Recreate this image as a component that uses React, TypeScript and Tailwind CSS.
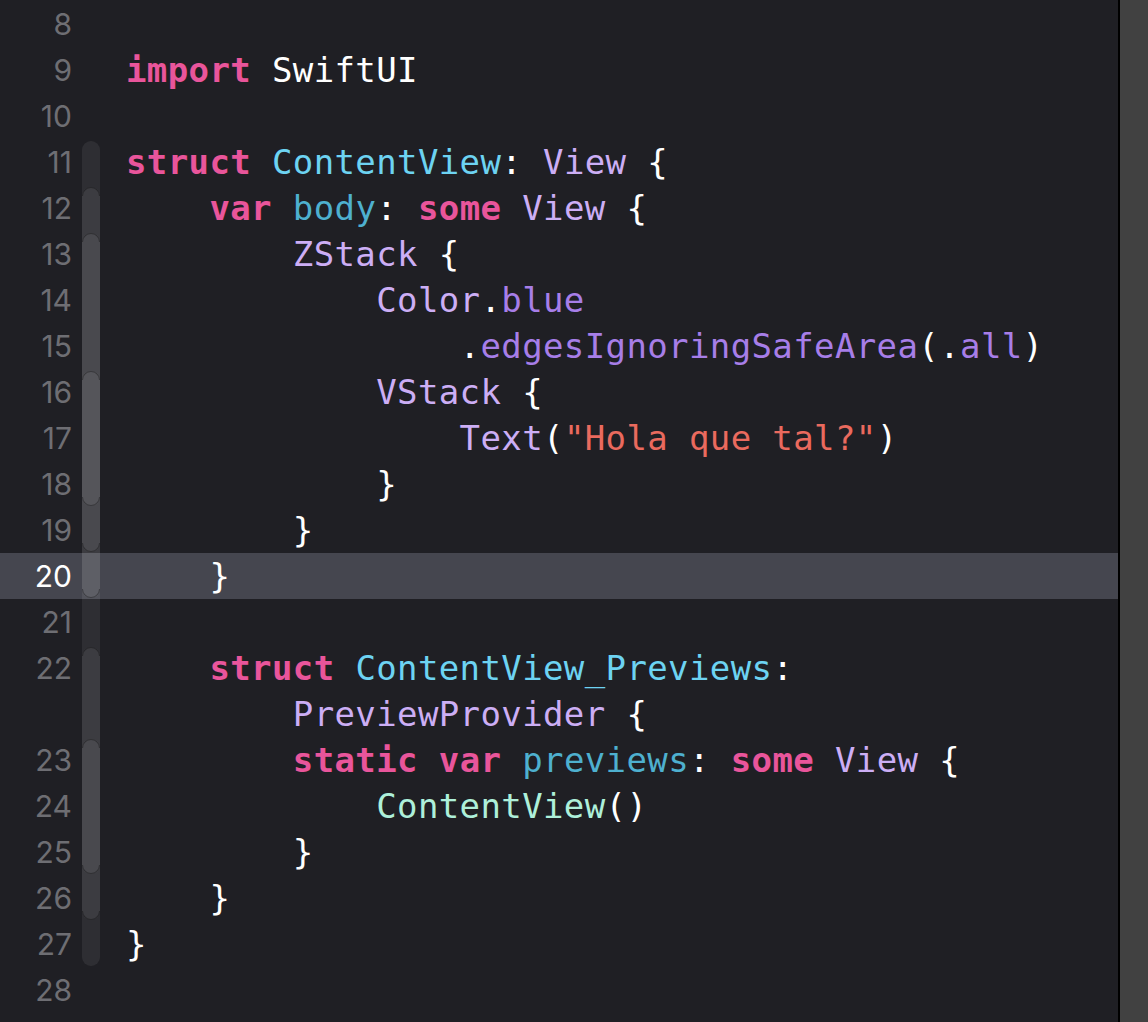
import React from 'react'

type Kind = 'kw' | 'plain' | 'decl' | 'type' | 'declOther' | 'prop' | 'str' | 'proj'
type Token = [Kind, string]

interface Row {
  num?: number
  indent: number
  tokens: Token[]
  active?: boolean
}

const kindClass: Record<Kind, string> = {
  kw: 'text-[#e9559b] font-bold',
  plain: 'text-white',
  decl: 'text-[#6dd3f2]',
  type: 'text-[#ccaef5]',
  declOther: 'text-[#4eb0cf]',
  prop: 'text-[#a77ee8]',
  str: 'text-[#ea6a5e]',
  proj: 'text-[#aef0da]',
}

const rows: Row[] = [
  { num: 8, indent: 0, tokens: [] },
  { num: 9, indent: 0, tokens: [['kw', 'import'], ['plain', ' SwiftUI']] },
  { num: 10, indent: 0, tokens: [] },
  {
    num: 11,
    indent: 0,
    tokens: [['kw', 'struct'], ['plain', ' '], ['decl', 'ContentView'], ['plain', ': '], ['type', 'View'], ['plain', ' {']],
  },
  {
    num: 12,
    indent: 1,
    tokens: [
      ['kw', 'var'],
      ['plain', ' '],
      ['declOther', 'body'],
      ['plain', ': '],
      ['kw', 'some'],
      ['plain', ' '],
      ['type', 'View'],
      ['plain', ' {'],
    ],
  },
  { num: 13, indent: 2, tokens: [['type', 'ZStack'], ['plain', ' {']] },
  { num: 14, indent: 3, tokens: [['type', 'Color'], ['plain', '.'], ['prop', 'blue']] },
  {
    num: 15,
    indent: 4,
    tokens: [['plain', '.'], ['prop', 'edgesIgnoringSafeArea'], ['plain', '(.'], ['prop', 'all'], ['plain', ')']],
  },
  { num: 16, indent: 3, tokens: [['type', 'VStack'], ['plain', ' {']] },
  { num: 17, indent: 4, tokens: [['type', 'Text'], ['plain', '('], ['str', '"Hola que tal?"'], ['plain', ')']] },
  { num: 18, indent: 3, tokens: [['plain', '}']] },
  { num: 19, indent: 2, tokens: [['plain', '}']] },
  { num: 20, indent: 1, tokens: [['plain', '}']], active: true },
  { num: 21, indent: 0, tokens: [] },
  { num: 22, indent: 1, tokens: [['kw', 'struct'], ['plain', ' '], ['decl', 'ContentView_Previews'], ['plain', ':']] },
  { indent: 2, tokens: [['type', 'PreviewProvider'], ['plain', ' {']] },
  {
    num: 23,
    indent: 2,
    tokens: [
      ['kw', 'static'],
      ['plain', ' '],
      ['kw', 'var'],
      ['plain', ' '],
      ['declOther', 'previews'],
      ['plain', ': '],
      ['kw', 'some'],
      ['plain', ' '],
      ['type', 'View'],
      ['plain', ' {'],
    ],
  },
  { num: 24, indent: 3, tokens: [['proj', 'ContentView'], ['plain', '()']] },
  { num: 25, indent: 2, tokens: [['plain', '}']] },
  { num: 26, indent: 1, tokens: [['plain', '}']] },
  { num: 27, indent: 0, tokens: [['plain', '}']] },
  { num: 28, indent: 0, tokens: [] },
]

// fold ribbon segments: [top, bottom] in px, nested so fills stack up
const folds: [number, number, boolean][] = [
  [141, 966, false],
  [187, 598, true],
  [233, 552, true],
  [371, 506, true],
  [647, 920, true],
  [739, 874, true],
]

function FoldRibbon() {
  return (
    <svg width="18" height="1022" viewBox="0 0 18 1022" className="block">
      {folds.map(([top, bottom, edged], i) => (
        <g key={i}>
          <rect x="0" y={top} width="18" height={bottom - top} rx="9" ry="9" fill="rgba(255,255,255,0.072)" />
          {edged && (
            <>
              <path d={`M0.5 ${top + 9} A8.5 8.5 0 0 1 17.5 ${top + 9}`} fill="none" stroke="rgba(0,0,0,0.35)" strokeWidth="1" />
              <path d={`M0.5 ${bottom - 9} A8.5 8.5 0 0 0 17.5 ${bottom - 9}`} fill="none" stroke="rgba(0,0,0,0.35)" strokeWidth="1" />
            </>
          )}
        </g>
      ))}
    </svg>
  )
}

export default function App() {
  return (
    <div className="flex w-[1148px] h-[1022px] overflow-hidden bg-[#1f1f24]">
      <div className="relative flex-1 pt-px">
        {rows.map((row, i) => (
          <div
            key={i}
            className={['flex h-[46px] items-center', row.active ? 'bg-[#45464f]' : ''].join(' ')}
          >
            <div
              className={[
                'w-[72px] shrink-0 text-right text-[30px] leading-none',
                row.active ? 'text-white' : 'text-[#6e6e73]',
              ].join(' ')}
              style={{ fontFamily: 'Inter, "Noto Sans", sans-serif' }}
            >
              {row.num ?? ''}
            </div>
            <div className="w-[54px] shrink-0" />
            <div
              className="whitespace-pre text-[34px] leading-[46px] tracking-[0.38px]"
              style={{ fontFamily: '"DejaVu Sans Mono", monospace' }}
            >
              {'    '.repeat(row.indent)}
              {row.tokens.map(([kind, text], j) => (
                <span key={j} className={kindClass[kind]}>
                  {text}
                </span>
              ))}
            </div>
          </div>
        ))}

        {/* code folding ribbon sits over the rows */}
        <div className="pointer-events-none absolute left-[82px] top-0">
          <FoldRibbon />
        </div>
      </div>
      <div className="w-[2px] shrink-0 bg-black" />
      <div className="w-[28px] shrink-0 bg-[#414141]" />
    </div>
  )
}
